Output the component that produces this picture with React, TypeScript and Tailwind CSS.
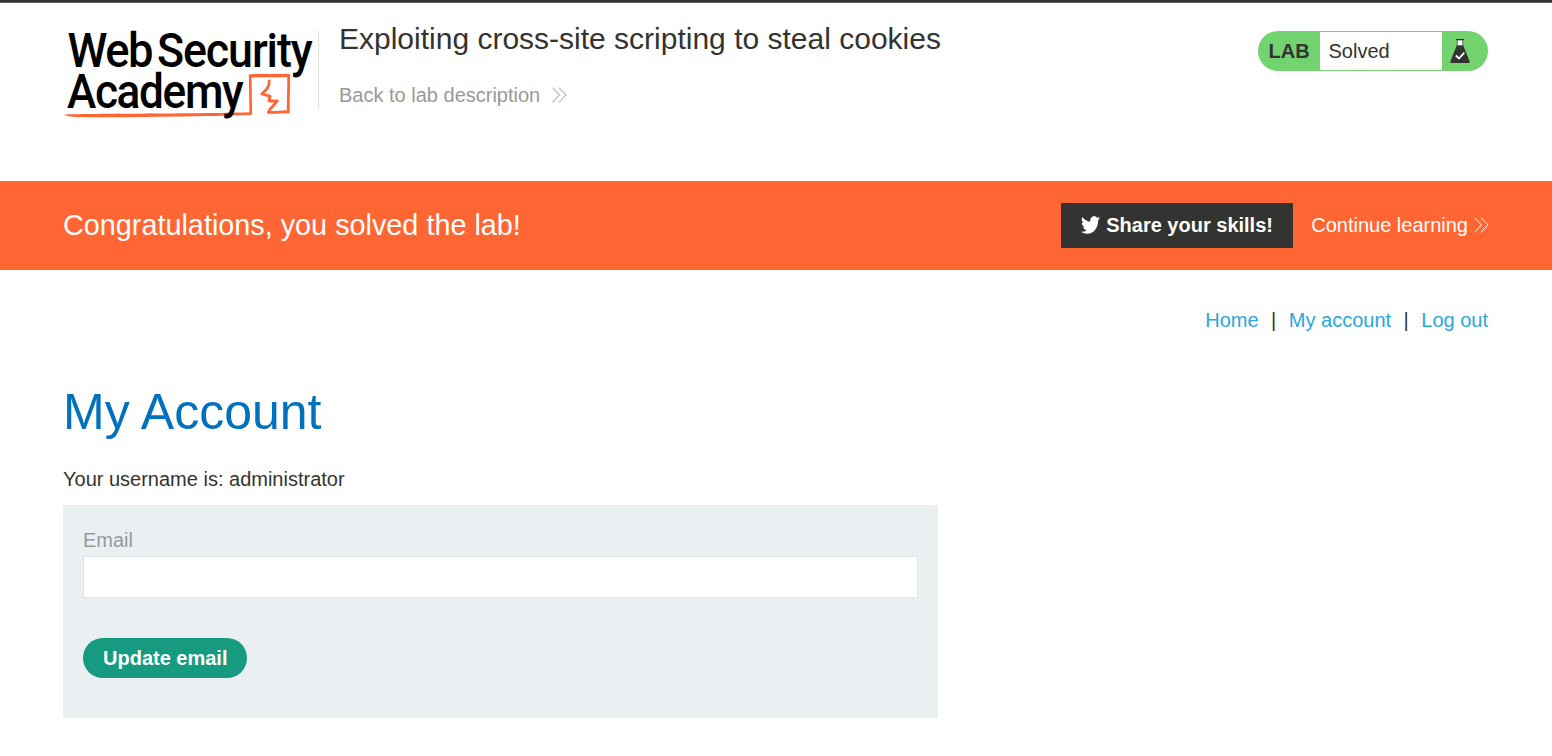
import React from "react";

function Chevrons({ className }: { className: string }) {
  return (
    <svg className={className} width="15" height="16" viewBox="0 0 15 16" fill="none" stroke="currentColor" strokeWidth="1">
      <path d="M0.5 0.7 7.5 8 0.5 15.3M7 0.7 14 8 7 15.3" />
    </svg>
  );
}

function Logo() {
  return (
    <svg width="255" height="106" viewBox="63 15 255 106" className="block shrink-0 overflow-visible">
      <g fill="none" stroke="#ff6633" strokeLinecap="round" strokeLinejoin="round">
        <path fill="#ff6633" stroke="none" d="M63.5 114.6 C95 113.4 190 114 250 112.300 L250.500 115 C190 116.600 110 117.800 76 117 Q68 116.800 63.500 114.600Z" />
        <path d="M250.800 113.600 250.200 76.600" strokeWidth="2.600" />
        <path d="M250.300 75.900 C260 74.900 275 76.200 288.700 75.400" strokeWidth="3.200" />
        <path d="M288.600 76 C289.200 87 287.800 97 288.400 111.500" strokeWidth="2.800" />
        <path d="M288.400 111.800 C282 111.300 275 113 268.400 112.300" strokeWidth="2.800" />
        <path d="M269.200 81 C269.800 87 265.500 90.500 261.800 94 L270 96.200 L269 101 L277.300 100.800 C274.800 105 270.500 107.500 268.600 111.800" strokeWidth="2.800" />
      </g>
      <g fill="#000" fontFamily="Roboto, sans-serif" fontWeight="500" fontSize="47.8">
        <text x="67.500" y="67" letterSpacing="-1.600" textLength="84.500" lengthAdjust="spacingAndGlyphs">Web</text>
        <text x="157" y="67" letterSpacing="-1.200" textLength="154.500" lengthAdjust="spacingAndGlyphs">Security</text>
        <text x="67" y="108" letterSpacing="-1.500" textLength="175.300" lengthAdjust="spacingAndGlyphs">Academy</text>
      </g>
    </svg>
  );
}

function Flask() {
  return (
    <svg width="22" height="26" viewBox="0 0 22 26" className="block">
      <path d="M7 1.500h8" stroke="#333332" strokeWidth="1" />
      <path d="M8.200 2h5.600v6H8.200z" fill="#fff" stroke="#333332" strokeWidth="0.700" />
      <path d="M7.800 7.500h6.400l6.200 15.200q1 2.300-1.400 2.300H3q-2.400 0-1.400-2.300z" fill="#333332" />
      <path d="m6.800 17.500 3.200 3 5.300-5.800" fill="none" stroke="#fff" strokeWidth="1.800" />
    </svg>
  );
}

export default function App() {
  return (
    <div className="h-[756px] overflow-hidden bg-white font-['Liberation_Sans',Arial,sans-serif] text-[20px] leading-6 text-[#333332]">
      <div className="h-[3px] border-b border-[#5b5b60] bg-[#35363a]" />
      <header className="flex h-[178px] items-start justify-between pr-16 pl-[63px]">
        <div className="flex">
          <div className="pt-[12px]">
            <Logo />
          </div>
          <div className="mt-[28px] h-[78px] w-px bg-[#e0e0e0]" />
          <div className="pt-[17px] pl-5">
            <h2 className="text-[30px] leading-[38px] whitespace-nowrap">Exploiting cross-site scripting to steal cookies</h2>
            <a href="#" className="mt-[25px] flex items-center text-[#999999]">
              Back to lab description
              <Chevrons className="ml-3" />
            </a>
          </div>
        </div>
        <div className="mt-[28px] flex h-10 w-[230px] overflow-hidden rounded-full bg-[#72d36f]">
          <span className="w-[62px] pl-[10.5px] text-[20px] leading-[41px] font-bold">LAB</span>
          <span className="my-px w-[122px] bg-white pl-[8.5px] leading-[38px]">Solved</span>
          <span className="pt-[7px] pl-[7px]">
            <Flask />
          </span>
        </div>
      </header>

      <section className="flex h-[89px] items-center justify-between bg-[#ff6633] px-[63px] text-white">
        <h4 className="pb-0.5 text-[28.8px] leading-9">Congratulations, you solved the lab!</h4>
        <div className="flex items-center">
          <button className="flex h-[45px] w-[232px] items-center bg-[#333332] pb-px pl-5 font-bold whitespace-nowrap">
            <svg width="19" height="18" viewBox="0 2 24 20" preserveAspectRatio="none" fill="#fff" className="mr-[6px] shrink-0">
              <path d="M23.953 4.57a10 10 0 01-2.825.775 4.958 4.958 0 002.163-2.723c-.951.555-2.005.959-3.127 1.184a4.920 4.920 0 00-8.384 4.482C7.690 8.095 4.067 6.130 1.640 3.162a4.822 4.822 0 00-.666 2.475c0 1.710.870 3.213 2.188 4.096a4.904 4.904 0 01-2.228-.616v.060a4.923 4.923 0 003.946 4.827 4.996 4.996 0 01-2.212.085 4.936 4.936 0 004.604 3.417 9.867 9.867 0 01-6.102 2.105c-.390 0-.779-.023-1.170-.067a13.995 13.995 0 007.557 2.209c9.053 0 13.998-7.496 13.998-13.985 0-.210 0-.420-.015-.630A9.935 9.935 0 0024 4.590z" />
            </svg>
            Share your skills!
          </button>
          <a href="#" className="ml-[18px] flex items-center pb-px whitespace-nowrap">
            Continue learning
            <Chevrons className="ml-[6px]" />
          </a>
        </div>
      </section>

      <main className="px-[63px]">
        <nav className="flex justify-end pt-[38px] pr-px text-[#29a7df]">
          <a href="#">Home</a>
          <span className="mx-[12.5px] text-[#333332]">|</span>
          <a href="#">My account</a>
          <span className="mx-[12.5px] text-[#333332]">|</span>
          <a href="#">Log out</a>
        </nav>
        <h1 className="mt-[50px] text-[50px] leading-[60px] text-[#0071bc]">My Account</h1>
        <p className="mt-[25px]">Your username is: administrator</p>
        <form className="mt-[14px] h-[213px] w-[875px] bg-[#eaeff2] px-5 pt-[23px]">
          <label className="block text-[#999999]">Email</label>
          <input type="email" className="mt-1 block h-[42px] w-full border border-[#e2e3e4] bg-white px-2" />
          <button type="button" className="mt-10 block h-10 rounded-full bg-[#169b80] px-5 font-bold text-white">
            Update email
          </button>
        </form>
      </main>
    </div>
  );
}
